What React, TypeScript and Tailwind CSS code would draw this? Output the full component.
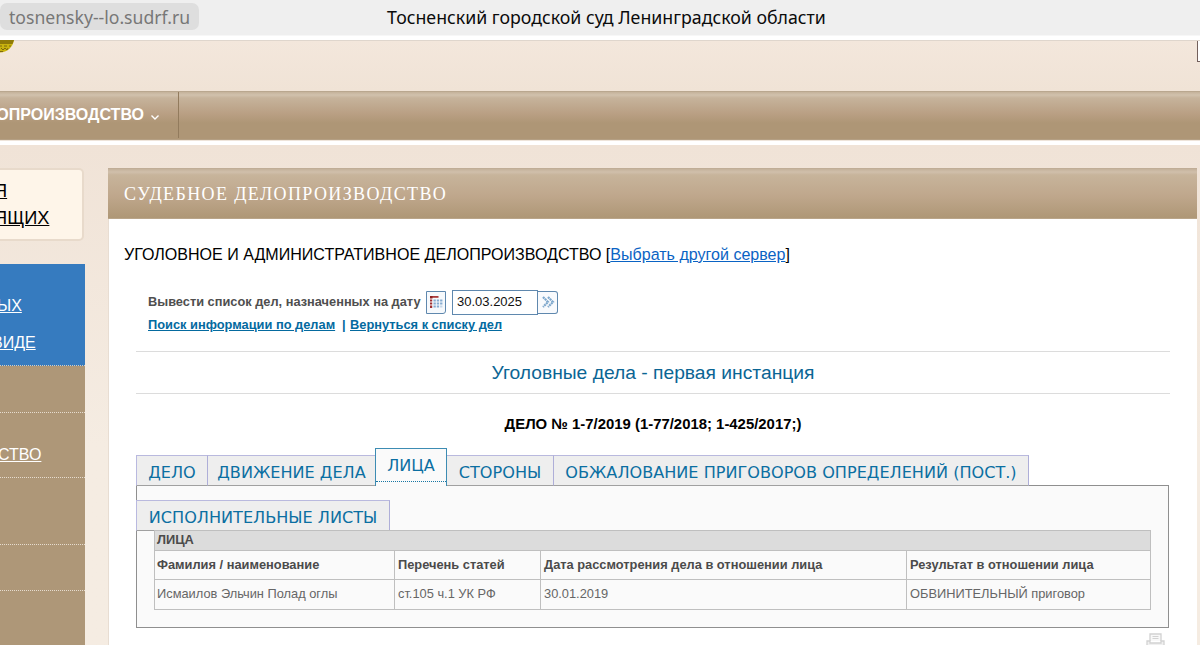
import type { ReactNode } from "react";

function Tab({ className, children }: { className: string; children: ReactNode }) {
  return (
    <a
      className={
        "box-border flex h-[31px] items-center justify-center whitespace-nowrap border-t border-r border-b border-t-[#b9b9de] border-r-[#aeaed8] border-b-[#a0a0a0] bg-[#eeeeee] pt-[5px] font-['DejaVu_Sans',sans-serif] text-[16.1px] leading-none text-[#0b6fa2] " +
        className
      }
    >
      {children}
    </a>
  );
}

function CalendarIcon() {
  const cells: ReactNode[] = [];
  for (let r = 0; r < 3; r++)
    for (let c = 0; c < 3; c++) {
      cells.push(<rect key={`${r}-${c}`} x={4.5 + c * 3.3} y={4.5 + r * 3} width="2.3" height="2" fill={r === 2 && c === 2 ? "#c5d6e8" : "#86abd0"} />);
    }
  return (
    <svg width="15" height="15" viewBox="0 0 15 15">
      <rect x="1" y="1" width="8.500" height="1.800" fill="#a83a3a" />
      <rect x="1" y="1" width="2.500" height="2.500" fill="#8e2020" />
      <rect x="1" y="4.500" width="2.200" height="2" fill="#a03030" />
      <rect x="1" y="7.500" width="2.200" height="2" fill="#a03030" />
      <rect x="1" y="10.500" width="2.200" height="2.500" fill="#a03030" />
      {cells}
    </svg>
  );
}

function GoIcon() {
  return (
    <svg width="14" height="14" viewBox="0 0 14 14" fill="none" stroke="#7da7cc" strokeWidth="2.2" strokeDasharray="2 0.6">
      <path d="M2 2l5 5-5 5M7 2l5 5-5 5" />
    </svg>
  );
}

function PrinterIcon() {
  return (
    <svg width="19" height="18" viewBox="0 0 19 18" fill="none" stroke="#d2d2d2" strokeWidth="1.3">
      <path d="M4 8V1h11v7" fill="#f8f8f8" />
      <path d="M6.500 3.500h6M6.500 5.500h6" strokeWidth="1" />
      <path d="M1 17V8h3v2h11V8h3v9" fill="#f0f0f0" />
    </svg>
  );
}

const cell = "box-border flex items-center whitespace-nowrap border-r border-[#bfbfbf] pl-[3px]";

export default function App() {
  return (
    <div className="flex h-[645px] w-[1200px] flex-col overflow-hidden bg-[#f2e6da] font-['Liberation_Sans',Arial,sans-serif]">
      <header className="grid h-[35px] shrink-0 grid-cols-[387px_1fr] items-center bg-[#efefef] font-['Noto_Sans',sans-serif]">
        <div className="mb-[2px] flex h-[27px] w-[199px] items-center rounded-[7px] bg-[#dedede] pt-[3px] pl-[9px] text-[17.6px] leading-none text-[#777777]">
          tosnensky--lo.sudrf.ru
        </div>
        <div className="whitespace-nowrap text-[17.75px] leading-none text-[#0b0b0b]">Тосненский городской суд Ленинградской области</div>
      </header>
      <div className="h-[5px] shrink-0 border-t border-[#f7f7f7] bg-white" />

      <div className="flex h-[51px] shrink-0 items-start justify-between border-t border-[#dfd6cd] bg-linear-to-b from-[#f3e7dc] to-[#f0e3d6]">
        <svg className="-mt-px" width="16" height="13" viewBox="0 0 16 13">
          <path d="M0 0H14C13 7 7 12.500 0 12.500Z" fill="#c9b30e" />
          <path d="M0 0H14L12.500 4H0Z" fill="#8f7a08" />
          <path d="M0 6h2M4 6h3M9 6h2M1 8l2 2 2-2 2 2 1-2M0 11.500h3" fill="none" stroke="#7d6a10" strokeWidth="1" />
        </svg>
        <div className="h-[21px] w-[3px] border-b border-l border-[#73605c] bg-white" />
      </div>

      <nav className="flex h-[49px] shrink-0 border-t border-b border-t-[#b9a78f] border-b-[#b49f83] bg-[linear-gradient(#c4b29a_0px,#d1c1ad_3px,#c6b39b_6px,#b99f83_22px,#ae9676_31px,#ae9676_100%)]">
        <div className="flex h-[46px] w-[179px] items-center justify-end border-r border-[#927b5d] pr-[18px] pb-px font-bold text-white">
          <span className="whitespace-nowrap text-[16px] leading-none">ОПРОИЗВОДСТВО</span>
          <svg className="mt-[5px] ml-[6px] shrink-0" width="10" height="7" viewBox="0 0 10 7" fill="none" stroke="white" strokeWidth="1.4">
            <path d="M1.500 1.500L5 5l3.500-3.500" />
          </svg>
        </div>
      </nav>
      <div className="h-[5px] shrink-0 border-t border-[#eee4da] bg-white" />

      <div className="flex h-[500px] shrink-0 bg-linear-to-b from-[#f0e3d7] to-[#f5ece2] to-60% pt-[23px]">
        <aside className="w-[85px] shrink-0 text-white">
          <div className="box-border flex h-[73px] w-[84px] flex-col items-start rounded-r-[5px] border-2 border-l-0 border-[#e8dacb] bg-[#fef5e9] pt-[8px] text-[18.2px] leading-[27px] text-black">
            <a className="-ml-[6px] underline">Я</a>
            <a className="-ml-[6px] underline">ЯЩИХ</a>
          </div>
          <div className="mt-[23px] box-border flex h-[102px] w-[84.5px] flex-col items-start border-b border-dotted border-[#d9cdbd] bg-[#367bbf] pt-[23px] text-[16px] leading-[37px]">
            <a className="-ml-[3px] underline">ЫХ</a>
            <a className="-ml-[8px] underline">ВИДЕ</a>
          </div>
          <div className="w-[84.5px] bg-[#ae9778]">
            <div className="box-border h-[47px] border-b border-dotted border-[#e6dccf]" />
            <div className="box-border flex h-[65px] items-center border-b border-dotted border-[#e6dccf] pt-[19px] text-[16px]">
              <a className="-ml-[2px] underline">СТВО</a>
            </div>
            <div className="box-border h-[67px] border-b border-dotted border-[#e6dccf]" />
            <div className="box-border h-[46px] border-b border-dotted border-[#e6dccf]" />
            <div className="h-[60px]" />
          </div>
        </aside>

        <main className="ml-[23px] flex w-[1089px] shrink-0 flex-col border-l border-[#e8ddd2] bg-white">
          <h1 className="-ml-px flex h-[51px] shrink-0 items-center border-t border-b border-t-[#c0ad96] border-b-[#b9a589] bg-[linear-gradient(#c4b29b_0px,#d0bfab_3px,#c7b49b_6px,#bfa78c_27px,#ae9776_100%)] pl-[16px] font-['Liberation_Serif',serif] text-[18px] leading-none font-normal tracking-[1.38px] text-white">
            СУДЕБНОЕ ДЕЛОПРОИЗВОДСТВО
          </h1>
          <p className="mt-[25px] h-[20px] shrink-0 pl-[15px] text-[16.06px] leading-[20px] whitespace-nowrap text-black">
            УГОЛОВНОЕ И АДМИНИСТРАТИВНОЕ ДЕЛОПРОИЗВОДСТВО [<a className="text-[#0a63c4] underline">Выбрать другой сервер</a>]
          </p>
          <div className="mt-[26px] flex h-[24px] shrink-0 items-center pl-[39px] text-[12.8px] font-bold text-[#4f4f4f]">
            <span className="w-[278px] whitespace-nowrap">Вывести список дел, назначенных на дату</span>
            <span className="box-border flex h-[23px] w-[20px] items-center justify-center rounded-br-[3px] border border-[#5f88ae] bg-[#f6f9fc]">
              <CalendarIcon />
            </span>
            <span className="ml-[6px] box-border flex h-[25px] w-[86px] items-center border border-[#5f88ae] bg-white pl-[4px] text-[13px] font-normal text-[#111111]">30.03.2025</span>
            <span className="box-border flex h-[23px] w-[20px] items-center justify-center rounded-r-[3px] border border-l-0 border-[#5f88ae] bg-[#f8fafd]">
              <GoIcon />
            </span>
          </div>
          <div className="flex h-[20px] shrink-0 items-center pl-[39px] pt-px text-[12.83px] font-bold whitespace-nowrap text-[#046a9f]">
            <a className="w-[187px] underline">Поиск информации по делам</a>
            <span className="w-[15px] pl-[7px]">|</span>
            <a className="underline">Вернуться к списку дел</a>
          </div>

          <div className="mt-[17px] mr-[27px] ml-[27px] box-border flex h-[43px] shrink-0 items-center justify-center border-y-[1.5px] border-[#dcdcdc] text-[19.25px] leading-none text-[#0b6594]">
            <span>Уголовные дела - первая инстанция</span>
          </div>
          <div className="mt-[20px] mr-[27px] ml-[27px] h-[20px] shrink-0 text-center text-[14.9px] leading-[20px] font-bold text-black">
            ДЕЛО № 1-7/2019 (1-77/2018; 1-425/2017;)
          </div>

          <div className="relative z-10 mt-[14px] ml-[27px] flex h-[38px] shrink-0 items-end">
            <Tab className="w-[72px] border-l border-l-[#b9b9e0]">ДЕЛО</Tab>
            <Tab className="w-[167px] border-r-0">ДВИЖЕНИЕ ДЕЛА</Tab>
            <a className="box-border flex h-[38px] w-[72px] flex-col border-x border-t border-[#3d8cb3] bg-[#fafafa] font-['DejaVu_Sans',sans-serif] text-[16.1px] leading-none text-[#0b6fa2]">
              <span className="flex h-[33px] items-center justify-center border-b border-dotted border-[#1876a3] pt-[2px]">ЛИЦА</span>
            </a>
            <Tab className="w-[107px]">СТОРОНЫ</Tab>
            <Tab className="w-[475px]">ОБЖАЛОВАНИЕ ПРИГОВОРОВ ОПРЕДЕЛЕНИЙ (ПОСТ.)</Tab>
          </div>

          <section className="-mt-px mr-[28px] ml-[27px] box-border h-[143px] shrink-0 border border-[#8f8f8f] bg-[#fafafa] pt-[14px]">
            <Tab className="-ml-px w-[254px] border-l border-l-[#b9b9e0] pt-[4px]">ИСПОЛНИТЕЛЬНЫЕ ЛИСТЫ</Tab>
            <div className="-mt-px ml-[17px] box-border w-[997px] border border-[#bfbfbf] text-[12.83px] leading-none text-[#4b4b4b]">
              <div className="box-border flex h-[20px] items-center border-b border-[#bfbfbf] bg-[#dcdcdc] pl-[2px] font-bold">ЛИЦА</div>
              <div className="box-border grid h-[29px] grid-cols-[240px_146px_366px_1fr] border-b border-[#bfbfbf] font-bold">
                <div className={cell + " -ml-px"}>Фамилия / наименование</div>
                <div className={cell}>Перечень статей</div>
                <div className={cell}>Дата рассмотрения дела в отношении лица</div>
                <div className={cell + " border-r-0"}>Результат в отношении лица</div>
              </div>
              <div className="grid h-[29px] grid-cols-[240px_146px_366px_1fr] text-[#666666]">
                <div className={cell + " -ml-px"}>Исмаилов Эльчин Полад оглы</div>
                <div className={cell}>ст.105 ч.1 УК РФ</div>
                <div className={cell}>30.01.2019</div>
                <div className={cell + " border-r-0"}>ОБВИНИТЕЛЬНЫЙ приговор</div>
              </div>
            </div>
          </section>
          <div className="flex h-[18px] shrink-0 justify-end pt-[5px] pr-[32px]">
            <PrinterIcon />
          </div>
        </main>
      </div>
    </div>
  );
}
